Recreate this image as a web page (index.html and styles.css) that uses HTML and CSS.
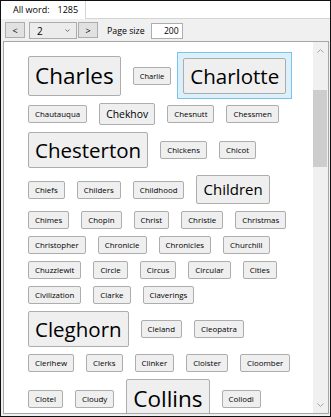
FILE: index.html
```html
<!DOCTYPE html>
<html lang="en">
<head>
    <meta charset="UTF-8">
    <meta name="viewport" content="width=device-width, initial-scale=1.0">
    <title>Word Cloud</title>
    <link rel="stylesheet" href="styles.css">
</head>
<body>
    <div class="window">
        <div class="tab-strip">
            <div class="tab">All word:<span class="tab-count">1285</span></div>
            <div class="tab-fill"></div>
        </div>

        <div class="toolbar">
            <button class="nav-btn">&lt;</button>
            <div class="combo">
                <span>2</span>
                <svg class="combo-arrow" width="5" height="3" viewBox="0 0 5 3">
                    <polyline points="0.5,0.5 2.5,2.5 4.5,0.5" fill="none" stroke="#707070" stroke-width="1"/>
                </svg>
            </div>
            <button class="nav-btn">&gt;</button>
            <span class="toolbar-label">Page size</span>
            <input type="text" class="page-size" value="200">
        </div>

        <div class="panel">
            <div class="words">
                <div class="word-item"><button class="word w-xxl">Charles</button></div>
                <div class="word-item"><button class="word w-xs">Charlie</button></div>
                <div class="word-item is-hover"><button class="word w-xl">Charlotte</button></div>

                <div class="word-item"><button class="word">Chautauqua</button></div>
                <div class="word-item"><button class="word w-m">Chekhov</button></div>
                <div class="word-item"><button class="word">Chesnutt</button></div>
                <div class="word-item"><button class="word">Chessmen</button></div>

                <div class="word-item"><button class="word w-xl">Chesterton</button></div>
                <div class="word-item"><button class="word">Chickens</button></div>
                <div class="word-item"><button class="word">Chicot</button></div>

                <div class="word-item"><button class="word">Chiefs</button></div>
                <div class="word-item"><button class="word">Childers</button></div>
                <div class="word-item"><button class="word">Childhood</button></div>
                <div class="word-item"><button class="word w-l">Children</button></div>

                <div class="word-item"><button class="word">Chimes</button></div>
                <div class="word-item"><button class="word">Chopin</button></div>
                <div class="word-item"><button class="word">Christ</button></div>
                <div class="word-item"><button class="word">Christie</button></div>
                <div class="word-item"><button class="word">Christmas</button></div>

                <div class="word-item"><button class="word">Christopher</button></div>
                <div class="word-item"><button class="word">Chronicle</button></div>
                <div class="word-item"><button class="word">Chronicles</button></div>
                <div class="word-item"><button class="word">Churchill</button></div>

                <div class="word-item"><button class="word">Chuzzlewit</button></div>
                <div class="word-item"><button class="word">Circle</button></div>
                <div class="word-item"><button class="word">Circus</button></div>
                <div class="word-item"><button class="word">Circular</button></div>
                <div class="word-item"><button class="word">Cities</button></div>

                <div class="word-item"><button class="word">Civilization</button></div>
                <div class="word-item"><button class="word">Clarke</button></div>
                <div class="word-item"><button class="word">Claverings</button></div>

                <div class="word-item"><button class="word w-xl">Cleghorn</button></div>
                <div class="word-item"><button class="word">Cleland</button></div>
                <div class="word-item"><button class="word">Cleopatra</button></div>

                <div class="word-item"><button class="word">Clerihew</button></div>
                <div class="word-item"><button class="word">Clerks</button></div>
                <div class="word-item"><button class="word">Clinker</button></div>
                <div class="word-item"><button class="word">Cloister</button></div>
                <div class="word-item"><button class="word">Cloomber</button></div>

                <div class="word-item"><button class="word">Clotel</button></div>
                <div class="word-item"><button class="word">Cloudy</button></div>
                <div class="word-item"><button class="word w-xxl">Collins</button></div>
                <div class="word-item"><button class="word">Collodi</button></div>
            </div>

            <div class="scrollbar">
                <div class="scroll-arrow">
                    <svg width="7" height="4" viewBox="0 0 7 4">
                        <polyline points="0.5,3.5 3.5,0.5 6.5,3.5" fill="none" stroke="#a6a6a6" stroke-width="1"/>
                    </svg>
                </div>
                <div class="scroll-track">
                    <div class="scroll-thumb"></div>
                </div>
                <div class="scroll-arrow">
                    <svg width="7" height="4" viewBox="0 0 7 4">
                        <polyline points="0.5,0.5 3.5,3.5 6.5,0.5" fill="none" stroke="#a6a6a6" stroke-width="1"/>
                    </svg>
                </div>
            </div>
        </div>
    </div>
</body>
</html>
```

FILE: styles.css
```css
* {
    margin: 0;
    padding: 0;
    box-sizing: border-box;
}

body {
    font-family: "Open Sans", "Noto Sans", sans-serif;
    color: #000;
    background: #fff;
}

.window {
    width: 331px;
    height: 417px;
    border: 1px solid #111;
    background: #f0f0f0;
    display: flex;
    flex-direction: column;
}

/* tab header */
.tab-strip {
    display: flex;
    height: 18px;
    background: #fff;
}

.tab {
    width: 85px;
    padding-left: 12px;
    font-size: 9px;
    line-height: 17px;
    background: #fff;
    border-right: 1px solid #d5d5d5;
}

.tab-count {
    margin-left: 8px;
}

.tab-fill {
    flex: 1;
    border-bottom: 1px solid #d5d5d5;
}

/* paging row */
.toolbar {
    height: 22px;
    padding: 3px 0 0 4px;
    display: flex;
    align-items: flex-start;
}

.nav-btn {
    width: 20px;
    height: 16px;
    background: #e1e1e1;
    border: 1px solid #adadad;
    font-family: inherit;
    font-size: 9px;
    line-height: 13px;
    color: #000;
}

.combo {
    width: 48px;
    height: 17px;
    margin: 0 1px 0 4px;
    padding: 0 6px 0 7px;
    background: #ececec;
    border: 1px solid #acacac;
    display: flex;
    align-items: center;
    justify-content: space-between;
    font-size: 10px;
}

.toolbar-label {
    margin-left: 9px;
    font-size: 8.8px;
    line-height: 18px;
}

.page-size {
    width: 32px;
    height: 16px;
    margin: 1px 0 0 6px;
    padding-right: 3px;
    border: 1px solid #abadb3;
    background: #fff;
    font-family: inherit;
    font-size: 8.6px;
    text-align: right;
    outline: none;
}

/* word list */
.panel {
    height: 373px;
    margin: 0 1px 0 2px;
    border: 1px solid #a6a6a6;
    background: #fff;
    display: flex;
    overflow: hidden;
}

.words {
    flex: 1;
    padding: 10px 11px 0 18px;
    display: flex;
    flex-wrap: wrap;
    align-content: flex-start;
    overflow: hidden;
}

.word-item {
    display: flex;
    align-items: center;
    padding: 3px 5px 2px;
    border: 1px solid transparent;
}

.word-item.is-hover {
    background: #dcf0fb;
    border-color: #7cc3ea;
}

.word {
    padding: 0 6px;
    background: #efefef;
    border: 1px solid #adadad;
    border-radius: 2px;
    font-family: inherit;
    font-size: 7.9px;
    line-height: 16px;
    color: #000;
    white-space: nowrap;
}

.w-xs {
    font-size: 7.5px;
}

.w-m {
    font-size: 10.4px;
    line-height: 20px;
}

.w-l {
    font-size: 15px;
    line-height: 27px;
}

.w-xl {
    font-size: 20.5px;
    line-height: 34px;
}

.w-xxl {
    font-size: 22.5px;
    line-height: 38px;
}

/* scrollbar */
.scrollbar {
    width: 15px;
    background: #f0f0f0;
    display: flex;
    flex-direction: column;
}

.scroll-arrow {
    height: 17px;
    display: flex;
    align-items: center;
    justify-content: center;
}

.scroll-track {
    flex: 1;
}

.scroll-thumb {
    height: 77px;
    margin: 31px 1px 0 0;
    background: #cdcdcd;
}
```
